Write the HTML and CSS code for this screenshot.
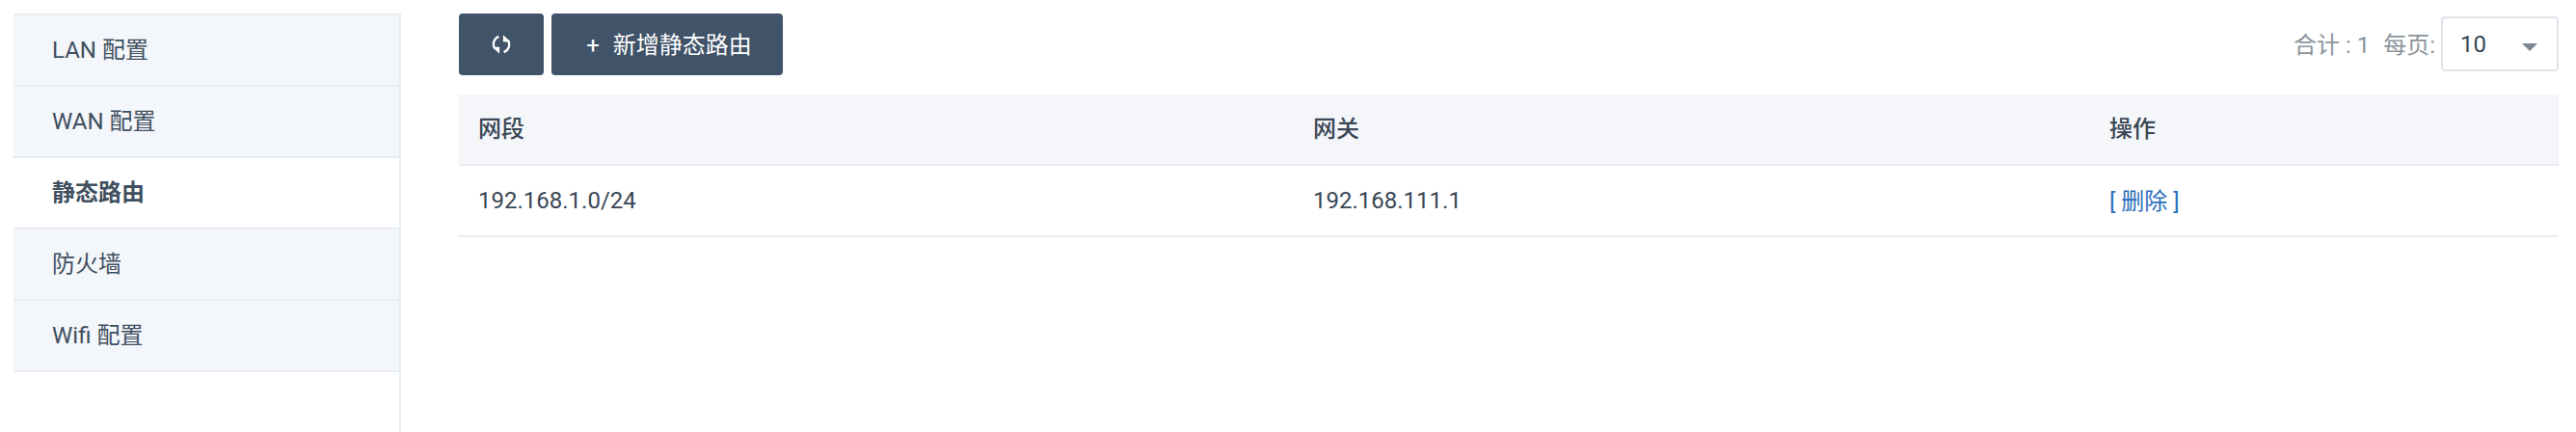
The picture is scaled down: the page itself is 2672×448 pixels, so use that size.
FILE: index.html
```html
<!DOCTYPE html>
<html lang="zh-CN">
<head>
    <meta charset="UTF-8">
    <title>静态路由</title>
    <link rel="stylesheet" href="styles.css">
</head>
<body>
    <div class="layout">
        <ul class="side-menu">
            <li>LAN 配置</li>
            <li>WAN 配置</li>
            <li class="active">静态路由</li>
            <li>防火墙</li>
            <li>Wifi 配置</li>
        </ul>
        <div class="content">
            <div class="toolbar">
                <button class="btn btn-refresh" type="button">
                    <svg class="icon-refresh" width="20" height="20" viewBox="0 0 20 20" fill="none">
                        <path d="M7.4 1.9A8.2 8.2 0 0 0 3.4 14.4" stroke="#fff" stroke-width="2.2"/>
                        <path d="M0.4 12.6l7.8 .2-.2 6.9z" fill="#fff"/>
                        <path d="M12.6 18.1A8.2 8.2 0 0 0 16.6 5.6" stroke="#fff" stroke-width="2.2"/>
                        <path d="M19.6 7.4l-7.8 -.2 .2 -6.9z" fill="#fff"/>
                    </svg>
                </button>
                <button class="btn btn-add" type="button"><span class="plus">+</span>新增静态路由</button>
                <div class="pager">
                    <span class="total">合计 : 1</span>
                    <span class="per-page">每页:</span>
                    <div class="select">
                        <span>10</span>
                        <i class="caret"></i>
                    </div>
                </div>
            </div>
            <table class="route-table">
                <thead>
                    <tr>
                        <th class="col-net">网段</th>
                        <th class="col-gw">网关</th>
                        <th>操作</th>
                    </tr>
                </thead>
                <tbody>
                    <tr>
                        <td>192.168.1.0/24</td>
                        <td>192.168.111.1</td>
                        <td class="cell-action"><a class="del" href="#">[ 删除 ]</a></td>
                    </tr>
                </tbody>
            </table>
        </div>
    </div>
</body>
</html>
```

FILE: styles.css
```css
* {
    box-sizing: border-box;
}

html, body {
    height: 100%;
}

body {
    margin: 0;
    background-color: #fff;
    font-family: Roboto, "Noto Sans CJK SC", sans-serif;
    font-size: 24px;
    color: #3a4654;
    overflow: hidden;
}

.layout {
    display: flex;
    height: 100%;
    padding: 14px 18px 0 14px;
}

.side-menu {
    width: 402px;
    flex-shrink: 0;
    margin: 0;
    padding: 0;
    list-style: none;
    border-top: 2px solid #e8edf1;
    border-right: 2px solid #e8edf1;
}

.side-menu li {
    height: 74px;
    line-height: 72px;
    padding-left: 40px;
    background-color: #f3f6fa;
    border-bottom: 2px solid #e8edf1;
    color: #3f4f60;
}

.side-menu li.active {
    background-color: #fff;
    font-weight: 700;
}

.content {
    flex: 1;
    padding-left: 60px;
}

.toolbar {
    display: flex;
    align-items: flex-start;
    height: 84px;
}

.btn {
    height: 64px;
    border: none;
    border-radius: 4px;
    background-color: #405368;
    color: #fff;
    font-family: inherit;
    font-size: 24px;
    padding: 0 0 4px 4px;
}

.btn-refresh {
    display: flex;
    align-items: center;
    justify-content: center;
    width: 88px;
    margin-right: 8px;
    padding: 0;
}

.btn-add {
    width: 240px;
}

.plus {
    margin-right: 14px;
}

.pager {
    display: flex;
    align-items: center;
    margin-left: auto;
    padding-top: 3px;
    color: #8b949c;
}

.total {
    margin-right: 14px;
    margin-bottom: 3px;
}

.per-page {
    margin-right: 6px;
    margin-bottom: 3px;
}

.select {
    display: flex;
    align-items: center;
    justify-content: space-between;
    width: 122px;
    height: 57px;
    padding: 0 20px 0 18px;
    border: 2px solid #dfe4ea;
    border-radius: 4px;
    color: #3a4654;
}

.caret {
    width: 0;
    height: 0;
    margin-top: 6px;
    border-left: 8px solid transparent;
    border-right: 8px solid transparent;
    border-top: 8px solid #7c8894;
}

.route-table {
    width: 100%;
    border-collapse: collapse;
    table-layout: fixed;
}

.route-table th,
.route-table td {
    padding: 0 20px;
    text-align: left;
}

.route-table th {
    height: 73px;
    padding-bottom: 6px;
    background-color: #f4f6fa;
    border-bottom: 2px solid #e8edf1;
    font-weight: 500;
}

.route-table td {
    height: 74px;
    border-bottom: 2px solid #e8edf1;
}

.route-table .cell-action {
    padding-bottom: 3px;
}

.route-table th:last-child,
.route-table .cell-action {
    padding-left: 19px;
}

.col-net {
    width: 866px;
}

.col-gw {
    width: 827px;
}

.del {
    color: #2a6ebb;
    text-decoration: none;
}
```
